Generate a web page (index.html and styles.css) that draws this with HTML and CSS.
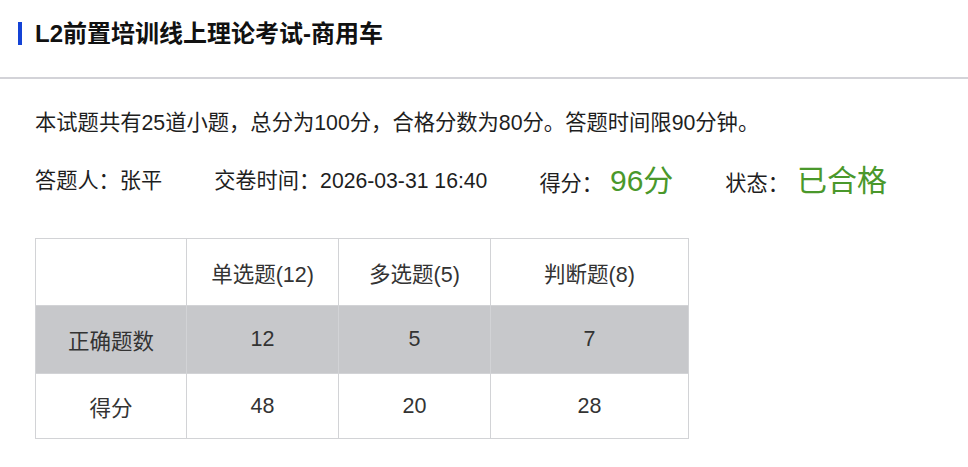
FILE: index.html
```html
<!DOCTYPE html>
<html lang="zh-CN">
<head>
<meta charset="utf-8">
<title>L2前置培训线上理论考试-商用车</title>
<link rel="stylesheet" href="styles.css">
</head>
<body>
<div class="page">
  <header class="head">
    <span class="bar"></span>
    <h1 class="title">L2前置培训线上理论考试-商用车</h1>
  </header>
  <section class="content">
    <p class="intro">本试题共有25道小题，总分为100分，合格分数为80分。答题时间限90分钟。</p>
    <div class="meta">
      <div class="item"><span class="label">答题人：</span><span class="val">张平</span></div>
      <div class="item"><span class="label">交卷时间：</span><span class="val">2026-03-31 16:40</span></div>
      <div class="item"><span class="label">得分：</span><span class="big">96分</span></div>
      <div class="item"><span class="label">状态：</span><span class="big big2">已合格</span></div>
    </div>
    <table class="stats">
      <colgroup>
        <col class="c1"><col class="c2"><col class="c3"><col class="c4">
      </colgroup>
      <tr class="r1"><td></td><td>单选题(12)</td><td>多选题(5)</td><td>判断题(8)</td></tr>
      <tr class="r2 shade"><td>正确题数</td><td>12</td><td>5</td><td>7</td></tr>
      <tr class="r3"><td>得分</td><td>48</td><td>20</td><td>28</td></tr>
    </table>
  </section>
</div>
</body>
</html>
```
FILE: styles.css
```css
* { box-sizing: border-box; }
html, body { margin: 0; padding: 0; background: #fff; }
body {
  font-family: "Liberation Sans", "Noto Sans CJK SC", sans-serif;
  color: #222;
}
.head {
  height: 79px;
  border-bottom: 2px solid #d3d3d8;
  display: flex;
  align-items: flex-start;
  padding: 22px 0 0 18px;
}
.bar {
  width: 4px;
  height: 23px;
  background: #1443d6;
  margin-right: 13px;
}
.title {
  margin: 0;
  font-size: 24px;
  line-height: 23px;
  font-weight: bold;
  color: #111;
}
.content { padding: 0 0 0 35px; }
.intro {
  margin: 0;
  padding-top: 30px;
  font-size: 21.3px;
  line-height: 28px;
  color: #1e1e1e;
}
.meta {
  display: flex;
  align-items: center;
  margin-top: 25px;
  height: 32px;
}
.item {
  display: flex;
  align-items: baseline;
  font-size: 21.2px;
  margin-right: 52px;
}
.label { color: #1e1e1e; }
.val { color: #1e1e1e; }
.big {
  font-size: 30px;
  color: #4a982b;
  margin-left: 7px;
}
.big2 { font-size: 30px; margin-left: 8px; }
.stats {
  margin-top: 44px;
  border-collapse: collapse;
  font-size: 21.5px;
  color: #333;
}
.stats td {
  border: 1px solid #d2d3d6;
  text-align: center;
  padding: 0;
}
.c1 { width: 151px; }
.c2 { width: 152px; }
.c3 { width: 152px; }
.c4 { width: 198px; }
.r1 td { height: 67px; }
.r2 td { height: 68px; }
.r3 td { height: 65px; }
.shade td { background: #c7c8cb; }
```
